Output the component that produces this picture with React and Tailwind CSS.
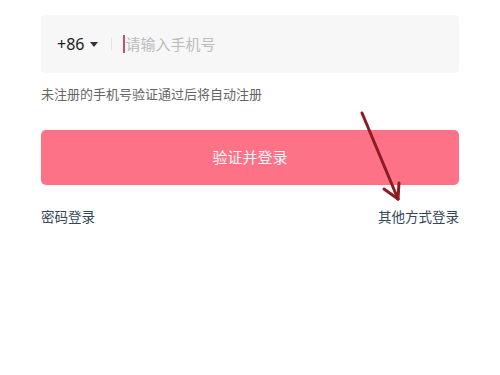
import React from 'react';

export default function App() {
    return (
        <div
            className="relative w-[500px] h-[375px] bg-white overflow-hidden"
            style={{ fontFamily: '"Noto Sans", "Noto Sans CJK SC", sans-serif' }}
        >
            <div className="px-[41px] pt-[15px]">
                {/* phone input */}
                <div className="h-[58px] bg-[#f7f7f7] rounded-sm flex items-center pl-[16px]">
                    <span className="text-[16px] text-[#222] leading-none">+86</span>
                    <span className="ml-[6px] w-0 h-0 border-l-[4px] border-r-[4px] border-t-[5px] border-l-transparent border-r-transparent border-t-[#333]" />
                    <span className="ml-[13px] w-px h-[12px] bg-[#e2e2e2]" />
                    <span className="ml-[11px] w-[2px] h-[18px] bg-[#c94a72]" />
                    <span className="text-[15px] text-[#bcbcbc] leading-none">请输入手机号</span>
                </div>

                <p className="mt-[13px] text-[13px] text-[#666] leading-[16px]">
                    未注册的手机号验证通过后将自动注册
                </p>

                <button className="mt-[28px] w-full h-[55px] rounded-[5px] bg-[#fe7288] text-[#fff5f6] text-[15px] flex items-center justify-center">
                    验证并登录
                </button>

                <div className="mt-[23px] flex justify-between text-[13.5px] text-[#34465a] leading-[18px]">
                    <span>密码登录</span>
                    <span>其他方式登录</span>
                </div>
            </div>

            {/* annotation arrow */}
            <svg className="absolute left-0 top-0 pointer-events-none" width="500" height="375">
                <g stroke="#8e1b1f" strokeWidth="3" strokeLinecap="round" fill="none">
                    <line x1="362" y1="113" x2="398" y2="199" />
                    <line x1="398" y1="199" x2="384" y2="189" />
                    <line x1="398" y1="199" x2="399" y2="183" />
                </g>
            </svg>
        </div>
    );
}
